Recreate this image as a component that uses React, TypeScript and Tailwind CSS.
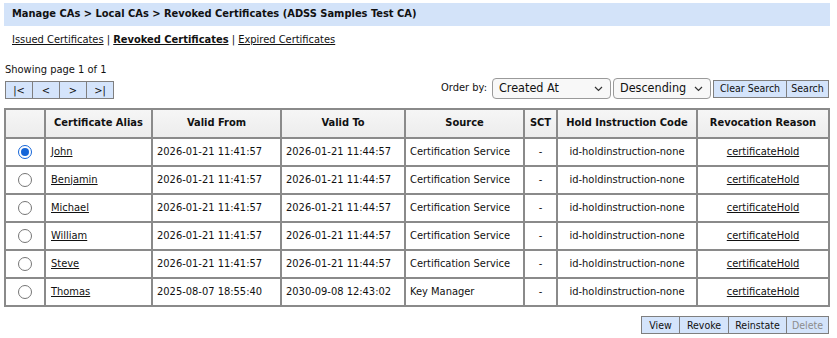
import React from 'react'

type Row = {
  alias: string
  from: string
  to: string
  source: string
}

const rows: Row[] = [
  { alias: 'John', from: '2026-01-21 11:41:57', to: '2026-01-21 11:44:57', source: 'Certification Service' },
  { alias: 'Benjamin', from: '2026-01-21 11:41:57', to: '2026-01-21 11:44:57', source: 'Certification Service' },
  { alias: 'Michael', from: '2026-01-21 11:41:57', to: '2026-01-21 11:44:57', source: 'Certification Service' },
  { alias: 'William', from: '2026-01-21 11:41:57', to: '2026-01-21 11:44:57', source: 'Certification Service' },
  { alias: 'Steve', from: '2026-01-21 11:41:57', to: '2026-01-21 11:44:57', source: 'Certification Service' },
  { alias: 'Thomas', from: '2025-08-07 18:55:40', to: '2030-09-08 12:43:02', source: 'Key Manager' },
]

const headers = [
  '',
  'Certificate Alias',
  'Valid From',
  'Valid To',
  'Source',
  'SCT',
  'Hold Instruction Code',
  'Revocation Reason',
]

const widths = [40, 107, 129, 124, 119, 33, 140, 132]

function Chevron() {
  return (
    <svg width="9" height="6" viewBox="0 0 9 6" className="shrink-0">
      <path d="M1 1 L4.5 4.5 L8 1" fill="none" stroke="#333" strokeWidth="1.2" />
    </svg>
  )
}

function Select({ label, width }: { label: string; width: string }) {
  return (
    <div
      className={`flex h-[21px] items-center justify-between rounded-[4px] border border-[#9a9a9a] bg-[#f8f8f8] pl-[6px] pr-[7px] text-[12.5px] text-[#111] ${width}`}
    >
      <span>{label}</span>
      <Chevron />
    </div>
  )
}

function Btn({ children, w, disabled }: { children: React.ReactNode; w: string; disabled?: boolean }) {
  return (
    <button
      className={`-ml-px h-[18px] border border-[#7f7f7f] bg-[#d4e4fb] text-[10.5px] leading-none first:ml-0 ${w} ${
        disabled ? 'text-[#8c8c8c]' : 'text-[#111]'
      }`}
    >
      {children}
    </button>
  )
}

function Radio({ checked }: { checked?: boolean }) {
  return checked ? (
    <span className="flex h-[14px] w-[14px] items-center justify-center rounded-full border-[1.5px] border-[#1565d8] bg-white">
      <span className="h-[8px] w-[8px] rounded-full bg-[#1565d8]" />
    </span>
  ) : (
    <span className="block h-[14px] w-[14px] rounded-full border border-[#767676] bg-white" />
  )
}

export default function App() {
  return (
    <div
      className="h-[338px] w-[837px] bg-white text-[11px] text-[#111]"
      style={{ fontFamily: '"DejaVu Sans Condensed", "DejaVu Sans", sans-serif' }}
    >
      <div className="pl-[4px] pr-[7px] pt-[3px]">
        <div className="flex h-[23px] items-center bg-[#d3e3f9] pl-[8px] text-[11px] font-bold">
          Manage CAs &gt; Local CAs &gt; Revoked Certificates (ADSS Samples Test CA)
        </div>
      </div>

      <div className="mt-[6px] pl-[12px] text-[11px]">
        <a className="underline">Issued Certificates</a> |{' '}
        <a className="font-bold underline">Revoked Certificates</a> |{' '}
        <a className="underline">Expired Certificates</a>
      </div>

      <div className="mt-[13px] flex items-end justify-between pl-[5px] pr-[8px]">
        <div>
          <div className="text-[11px]">Showing page 1 of 1</div>
          <div className="mt-[3px] flex">
            {['|<', '<', '>', '>|'].map((s) => (
              <button
                key={s}
                className="-ml-px h-[18px] w-[28px] border border-[#7f7f7f] bg-[#d4e4fb] text-[11px] leading-none first:ml-0"
              >
                {s}
              </button>
            ))}
          </div>
        </div>
        <div className="flex items-center gap-[2px]">
          <span className="mr-[3px] text-[11px]">Order by:</span>
          <Select label="Created At" width="w-[119px]" />
          <Select label="Descending" width="w-[98px]" />
          <div className="flex">
            <Btn w="w-[74px]">Clear Search</Btn>
            <Btn w="w-[43px]">Search</Btn>
          </div>
        </div>
      </div>

      <div className="mt-[9px] pl-[4px]">
        <table className="table-fixed border-collapse border-2 border-[#8a8a8a]" style={{ width: 826 }}>
          <colgroup>
            {widths.map((w, i) => (
              <col key={i} style={{ width: w }} />
            ))}
          </colgroup>
          <thead>
            <tr className="h-[29px] bg-gradient-to-b from-[#f6f6f6] to-[#ececec]">
              {headers.map((h, i) => (
                <th key={i} className="border-2 border-[#8a8a8a] text-center text-[11px] font-bold">
                  {h}
                </th>
              ))}
            </tr>
          </thead>
          <tbody>
            {rows.map((r, i) => (
              <tr key={r.alias} className="h-[28px]">
                <td className="border-2 border-[#8a8a8a]">
                  <div className="flex justify-center">
                    <Radio checked={i === 0} />
                  </div>
                </td>
                <td className="border-2 border-[#8a8a8a] pl-[5px]">
                  <a className="underline">{r.alias}</a>
                </td>
                <td className="border-2 border-[#8a8a8a] pl-[4px]">{r.from}</td>
                <td className="border-2 border-[#8a8a8a] pl-[4px]">{r.to}</td>
                <td className="border-2 border-[#8a8a8a] pl-[4px]">{r.source}</td>
                <td className="border-2 border-[#8a8a8a] text-center">-</td>
                <td className="border-2 border-[#8a8a8a] text-center">id-holdinstruction-none</td>
                <td className="border-2 border-[#8a8a8a] text-center">
                  <a className="underline">certificateHold</a>
                </td>
              </tr>
            ))}
          </tbody>
        </table>
      </div>

      <div className="mt-[9px] flex justify-end pr-[8px]">
        <Btn w="w-[39px]">View</Btn>
        <Btn w="w-[50px]">Revoke</Btn>
        <Btn w="w-[59px]">Reinstate</Btn>
        <Btn w="w-[43px]" disabled>
          Delete
        </Btn>
      </div>
    </div>
  )
}
